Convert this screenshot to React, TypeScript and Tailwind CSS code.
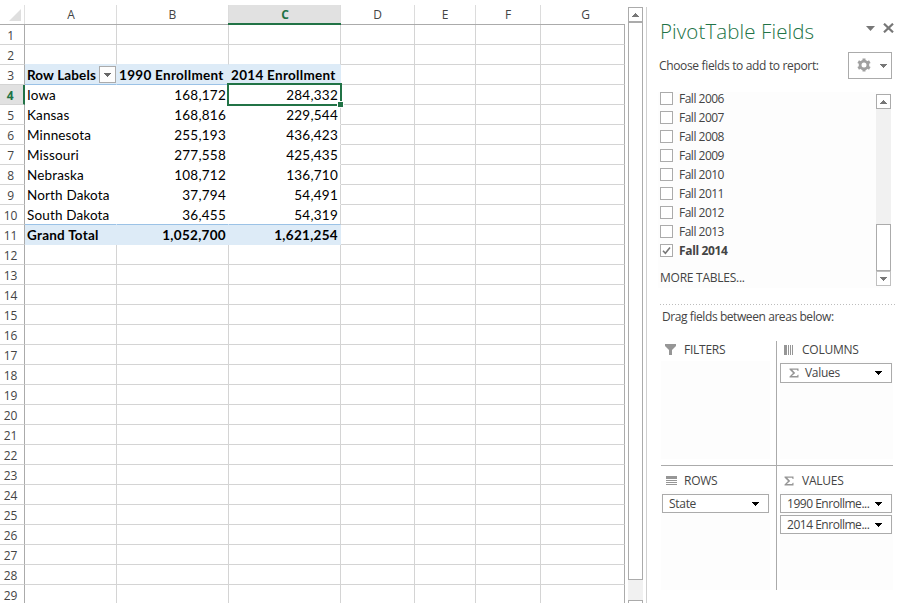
import React from "react";
import { clsx } from "clsx";

type Col = { name: string; width: string };

const COLS: Col[] = [
  { name: "A", width: "w-[92px]" },
  { name: "B", width: "w-[112px]" },
  { name: "C", width: "w-[112px]" },
  { name: "D", width: "w-[74px]" },
  { name: "E", width: "w-[61px]" },
  { name: "F", width: "w-[65px]" },
  { name: "G", width: "w-[84px]" },
];

const DATA: Record<number, string[]> = {
  3: ["Row Labels", "1990 Enrollment", "2014 Enrollment"],
  4: ["Iowa", "168,172", "284,332"],
  5: ["Kansas", "168,816", "229,544"],
  6: ["Minnesota", "255,193", "436,423"],
  7: ["Missouri", "277,558", "425,435"],
  8: ["Nebraska", "108,712", "136,710"],
  9: ["North Dakota", "37,794", "54,491"],
  10: ["South Dakota", "36,455", "54,319"],
  11: ["Grand Total", "1,052,700", "1,621,254"],
};

const ROWS = Array.from({ length: 29 }, (_, i) => i + 1);
const YEARS = [2006, 2007, 2008, 2009, 2010, 2011, 2012, 2013, 2014];

function Triangle({ up, className }: { up?: boolean; className?: string }) {
  return (
    <svg width="7" height="4" viewBox="0 0 7 4" shapeRendering="crispEdges" className={clsx("shrink-0", className)}>
      <path d={up ? "M3 0h1v1h1v1h1v1h1v1H0V3h1V2h1V1h1z" : "M0 0h7v1H6v1H5v1H4v1H3V3H2V2H1V1H0z"} fill="currentColor" />
    </svg>
  );
}

function Arrow({ className }: { className?: string }) {
  return (
    <svg width="9" height="5" viewBox="0 0 9 5" className={clsx("shrink-0", className)}>
      <path d="M0 0h9L4.5 5z" fill="currentColor" />
    </svg>
  );
}

function Cell({ row, col }: { row: number; col: number }) {
  const pivot = col < 3 && row >= 3 && row <= 11;
  const banded = pivot && (row === 3 || row === 11);
  const text = pivot ? DATA[row][col] : "";
  const numeric = pivot && col > 0 && row > 3;
  return (
    <div
      className={clsx(
        "flex h-5 shrink-0 items-center border-r border-b pt-[2px] whitespace-pre text-black",
        COLS[col].width,
        banded ? "bg-[#ddebf7] font-bold" : "bg-white",
        numeric && "justify-end",
        col === 0 ? "pl-[2px]" : row === 3 ? "pl-[2px]" : "pr-[2px]",
        !pivot && (col === 6 ? "border-r-[#ababab]" : "border-r-[#d4d4d4]"),
        banded && "border-r-[#ddebf7]",
        pivot && !banded && (col === 2 ? "border-r-[#d4d4d4]" : "border-r-white"),
        (row === 3 || row === 10) && pivot
          ? "border-b-[#9bc2e6]"
          : pivot
            ? row === 11 ? "border-b-[#ddebf7]" : "border-b-white"
            : row === 2 && col < 3 ? "border-b-[#ddebf7]" : "border-b-[#d4d4d4]",
        banded
          ? row === 3
            ? col === 0 ? "text-[13.5px] tracking-[0.12px]" : "text-[13.5px] tracking-[0.3px]"
            : col === 0 ? "text-[13.5px] tracking-[0.25px]" : "text-[13.5px] tracking-[0.3px]"
          : numeric ? "text-[13.5px] tracking-[0.25px]" : "text-[13.5px] tracking-[0.15px]",
      )}
    >
      {text}
    </div>
  );
}

function Sheet() {
  return (
    <div className="relative w-[625px] shrink-0 overflow-hidden pt-[5px] font-['Lato','Noto_Sans',sans-serif]">
      <div className="flex h-5 border-b border-[#ababab] font-['Open_Sans','Noto_Sans',sans-serif] text-[12px] text-[#444]">
        <div className="flex w-[25px] shrink-0 items-start border-r border-[#e0e0e0] pt-1 pl-[9px]">
          <svg width="12" height="12" viewBox="0 0 12 12"><path d="M12 0v12H0z" fill="#dfdfdf" /></svg>
        </div>
        {COLS.map((c, i) => (
          <div
            key={c.name}
            className={clsx(
              "flex h-[19px] shrink-0 items-center justify-center",
              c.width,
              i === 2 ? "bg-[#e1e1e1] pl-px font-bold text-[#217346]" : "",
              i === 0 && "pl-px",
              i < 6 ? "border-r border-[#dcdcdc]" : "pl-[5px]",
            )}
          >
            {c.name}
          </div>
        ))}
      </div>
      {ROWS.map((r) => (
        <div key={r} className="flex h-5">
          <div
            className={clsx(
              "flex h-5 w-[25px] shrink-0 items-center justify-center border-b border-b-[#d4d4d4] pt-[2px] pr-[3px] font-['Open_Sans','Noto_Sans',sans-serif] text-[12px] tracking-[-0.2px]",
              r === 4 ? "border-r-2 border-r-[#217346] bg-[#e1e1e1] font-bold text-[#217346]" : "border-r border-r-[#ababab] pr-1 text-[#444]",
            )}
          >
            {r}
          </div>
          {COLS.map((c, i) => <Cell key={c.name} row={r} col={i} />)}
        </div>
      ))}
      <div className="absolute top-[23px] left-[228px] h-[2px] w-[113px] bg-[#217346]" />
      <div className="absolute top-[83px] left-[227px] h-[23px] w-[115px] border-2 border-[#217346]" />
      <div className="absolute top-[101px] left-[337px] h-[7px] w-[7px] border border-white bg-[#217346]" />
      <div className="absolute top-[66px] left-[99px] flex h-[17px] w-[17px] items-center justify-center border border-[#ababab] bg-[#fdfdfd] text-[#666]">
        <Triangle />
      </div>
    </div>
  );
}

function SheetScrollbar() {
  return (
    <div className="ml-[3px] flex w-[15px] shrink-0 flex-col pt-[7px] text-[#777]">
      <div className="flex h-[15px] shrink-0 items-center justify-center border border-[#ababab] bg-white"><Triangle up /></div>
      <div className="h-[558px] shrink-0 border border-[#ababab] bg-white" />
      <div className="h-5 shrink-0 bg-[#f1f1f1]" />
      <div className="h-[3px] shrink-0 border border-b-0 border-[#ababab] bg-white" />
    </div>
  );
}

function Gear() {
  return (
    <svg width="14" height="14" viewBox="0 0 14 14" className="-mt-px -ml-px mr-px text-[#a0a0a0]">
      <g stroke="currentColor" strokeWidth="3">
        <path d="M7 .5v3M7 10.5v3M1.2 3.6l2.8 1.7M10 8.7l2.8 1.7M1.2 10.4L4 8.7M10 5.3l2.8-1.7" />
      </g>
      <circle cx="7" cy="7" r="3.9" fill="none" stroke="currentColor" strokeWidth="2.8" />
    </svg>
  );
}

function Sigma() {
  return (
    <svg width="10" height="10" viewBox="0 0 10 10">
      <path d="M.5.5h9V3h-.8L8 1.8H3.2L6.2 5l-3.3 3H8l.8-1.2h.7v2.7h-9v-1L4 5.1.5 1.5z" fill="#969696" />
    </svg>
  );
}

function Funnel() {
  return <svg width="11" height="11" viewBox="0 0 11 11"><path d="M0 0h11v2L7 6v5H4V6L0 2z" fill="#969696" /></svg>;
}

function ColumnsIcon() {
  return <svg width="10" height="10" viewBox="0 0 10 10" shapeRendering="crispEdges"><path d="M0 0h3v10H0zM4 0h1v10H4zM6 0h1v10H6zM8 0h1v10H8z" fill="#969696" /></svg>;
}

function RowsIcon() {
  return <svg width="11" height="9" viewBox="0 0 11 9" shapeRendering="crispEdges"><path d="M0 0h11v3H0zM0 4h11v1H0zM0 6h11v1H0zM0 8h11v1H0z" fill="#969696" /></svg>;
}

function AreaTitle({ icon, children }: { icon: React.ReactNode; children: string }) {
  return (
    <div className="flex h-[18px] items-center text-[12px] tracking-[-0.25px]">
      <span className="flex w-[18px] shrink-0 items-center pb-px">{icon}</span>
      {children}
    </div>
  );
}

function Field({ label, className, sigma }: { label: string; className: string; sigma?: boolean }) {
  return (
    <div className={clsx("flex items-center border border-[#ababab] bg-white pr-[9px] pl-[6px] text-[12px] whitespace-nowrap", className)}>
      {sigma && <span className="mr-[6px] ml-[2px]"><Sigma /></span>}
      <span className={clsx("flex-1", label.length > 6 ? "tracking-[-0.48px]" : "tracking-[-0.3px]")}>{label}</span>
      <Triangle className="text-black" />
    </div>
  );
}

function FieldList() {
  return (
    <div className="ml-[11px] flex h-[196px] w-[233px] justify-between bg-[#fdfdfd] text-[12px]">
      <div className="pl-[2px]">
        {YEARS.map((y) => (
          <div key={y} className="flex h-[19px] items-start">
            <span className="mr-[6px] flex h-[13px] w-[13px] items-center justify-center border border-[#ababab] bg-white">
              {y === 2014 && (
                <svg width="9" height="9" viewBox="0 0 9 9"><path d="M1 4.7L3.4 7.3 8 1.4" fill="none" stroke="#777" strokeWidth="1.6" /></svg>
              )}
            </span>
            <span className={clsx("leading-[14px]", y === 2014 ? "font-bold tracking-[-0.35px]" : "tracking-[-0.5px]")}>{`Fall ${y}`}</span>
          </div>
        ))}
        <div className="mt-[7px] leading-4 tracking-[-0.25px]">MORE TABLES...</div>
      </div>
      <div className="mt-[2px] flex h-[192px] w-[15px] flex-col bg-[#f1f1f1] text-[#777]">
        <div className="flex h-[15px] items-center justify-center border border-[#ababab] bg-white"><Triangle up /></div>
        <div className="flex-1" />
        <div className="h-[47px] border border-[#ababab] bg-white" />
        <div className="flex h-[15px] items-center justify-center border border-[#c0c0c0] bg-white"><Triangle /></div>
      </div>
    </div>
  );
}

function Pane() {
  return (
    <div className="ml-[3px] h-[603px] w-[252px] shrink-0 overflow-hidden pt-[7px]">
      <div className="h-full border-l border-[#d0d0d0] font-['Open_Sans','Noto_Sans',sans-serif] text-[#444]">
        <div className="flex h-[45px] items-start pl-[13px]">
          <h1 className="w-[206px] pt-[10px] text-[20.5px] leading-7 font-light tracking-[0.1px] whitespace-nowrap text-[#217346]">PivotTable Fields</h1>
          <Arrow className="mt-[19px] text-[#777]" />
          <svg width="11" height="10" viewBox="0 0 11 10" className="mt-4 ml-2"><path d="M1 .7l9 8.6M10 .7L1 9.3" stroke="#777" strokeWidth="2.2" /></svg>
        </div>
        <div className="flex h-[40px] items-start pl-[12px]">
          <div className="w-[189px] pt-[5px] text-[12px] leading-[18px] tracking-[-0.34px] whitespace-nowrap">Choose fields to add to report:</div>
          <div className="flex h-[27px] w-[44px] items-center border border-[#ababab] pl-[9px]">
            <Gear />
            <Triangle className="ml-2 text-[#777]" />
          </div>
        </div>
        <FieldList />
        <div className="mt-4 ml-[13px] h-px w-[235px] bg-[repeating-linear-gradient(90deg,#bdbdbd_0px_1px,transparent_1px_3px)]" />
        <div className="ml-[15px] pt-[3px] text-[12px] leading-[18px] tracking-[-0.42px]">Drag fields between areas below:</div>
        <div className="mt-[15px] ml-[14px] grid w-[232px] grid-cols-[116px_116px] grid-rows-[125px_124px]">
          <div className="border-r border-b border-[#ababab]">
            <div className="h-5 pl-[5px]"><AreaTitle icon={<span className="-ml-px"><Funnel /></span>}>FILTERS</AreaTitle></div>
            <div className="h-[98px] w-[109px] bg-[#fdfdfd]" />
          </div>
          <div className="border-b border-[#ababab]">
            <div className="h-5 pl-[7px]"><AreaTitle icon={<ColumnsIcon />}>COLUMNS</AreaTitle></div>
            <div className="ml-[3px] h-[98px] w-[113px] bg-[#fdfdfd] pt-[2px]"><Field label="Values" sigma className="h-5 w-[112px]" /></div>
          </div>
          <div className="border-r border-[#ababab] pt-[6px]">
            <div className="h-[19px] pl-[5px]"><AreaTitle icon={<RowsIcon />}>ROWS</AreaTitle></div>
            <div className="h-[99px] w-[109px] bg-[#fdfdfd] pt-[3px] pl-px"><Field label="State" className="h-[19px] w-[107px]" /></div>
          </div>
          <div className="pt-[6px]">
            <div className="h-[19px] pl-[7px]"><AreaTitle icon={<Sigma />}>VALUES</AreaTitle></div>
            <div className="ml-[3px] flex h-[99px] w-[113px] flex-col gap-[2px] bg-[#fdfdfd] pt-[3px]">
              <Field label="1990 Enrollme..." className="h-[19px] w-[112px]" />
              <Field label="2014 Enrollme..." className="h-[19px] w-[112px]" />
            </div>
          </div>
        </div>
      </div>
    </div>
  );
}

export default function App() {
  return (
    <div className="flex h-[603px] w-[898px] overflow-hidden bg-white">
      <Sheet />
      <SheetScrollbar />
      <Pane />
    </div>
  );
}
